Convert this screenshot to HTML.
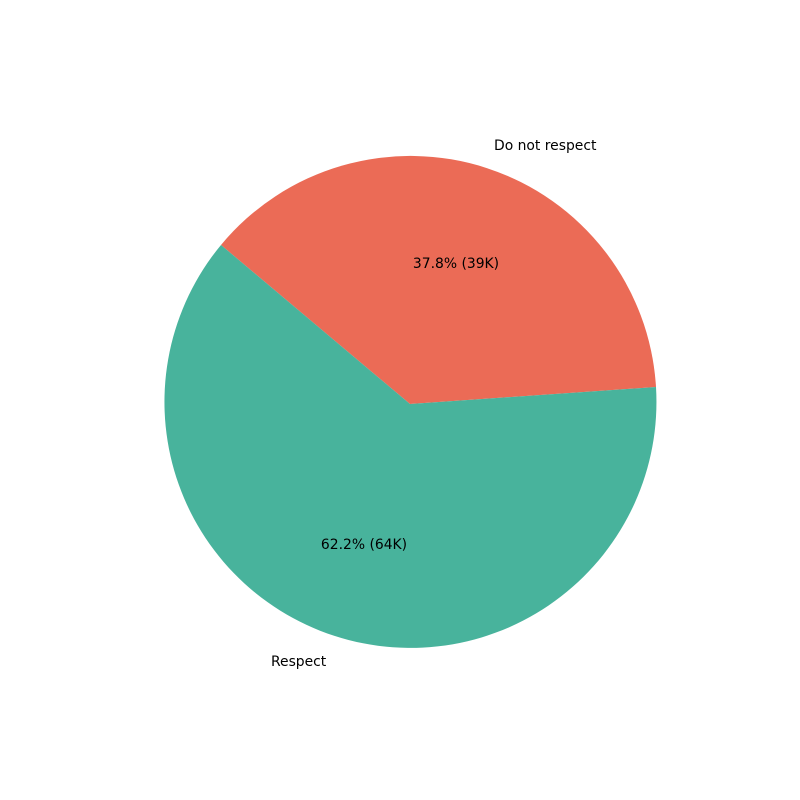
<!DOCTYPE html>
<html><head><style>html,body{margin:0;padding:0;background:#fff;}svg{display:block}</style></head>
<body>
<svg width="800" height="800" viewBox="0 0 800 800" xmlns="http://www.w3.org/2000/svg" font-family="DejaVu Sans, Liberation Sans, sans-serif" font-size="13.9">
<rect width="800" height="800" fill="#fff"/>
<path d="M410,404 L656,387 A246,246 0 0 0 221,245 Z" fill="#EB6B56"/>
<path d="M410,404 L221,245 A246,246 0 1 0 656,387 Z" fill="#48B39C"/>
<text x="494" y="150" fill="#000">Do not respect</text>
<text x="456" y="268" fill="#000" text-anchor="middle">37.8% (39K)</text>
<text x="364" y="549" fill="#000" text-anchor="middle">62.2% (64K)</text>
<text x="271" y="666" fill="#000">Respect</text>
</svg>
</body></html>
